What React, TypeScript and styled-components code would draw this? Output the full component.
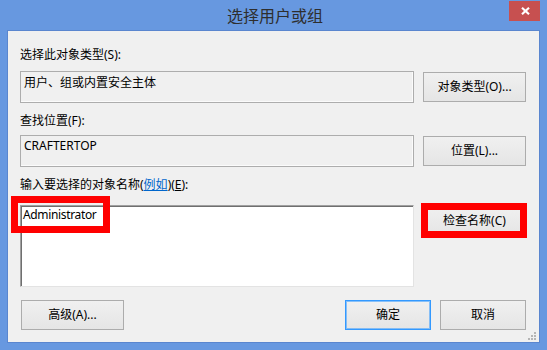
import React from "react";
import styled, { createGlobalStyle } from "styled-components";

const GlobalStyle = createGlobalStyle`
  html, body {
    margin: 0;
    padding: 0;
    background: #6798e0;
  }
  body {
    font-family: "Noto Sans", "Noto Sans CJK SC", sans-serif;
    font-size: 12px;
    color: #000;
  }
  * { box-sizing: border-box; }
`;

const Window = styled.div`
  width: 547px;
  height: 350px;
  background: #6798e0;
  display: flex;
  flex-direction: column;
  overflow: hidden;
`;

const TitleBar = styled.div`
  height: 30px;
  display: grid;
  grid-template-columns: 1fr auto 1fr;
  align-items: start;
`;

const Title = styled.div`
  grid-column: 2;
  line-height: 31px;
  font-size: 16px;
  color: #2e2e2e;
  font-family: "Noto Sans CJK SC", sans-serif;
  padding-left: 3px;
`;

const CloseButton = styled.div`
  grid-column: 3;
  justify-self: end;
  width: 31px;
  height: 20px;
  margin-top: 1px;
  margin-right: 7px;
  background: #c75050;
  display: flex;
  align-items: center;
  justify-content: center;
  padding-left: 1px;
`;

const Client = styled.div`
  position: relative;
  margin: 0 7px;
  height: 313px;
  border: 1px solid #5a86cf;
  background: #f0f0f0;
  padding: 16px 13px 0 12px;
  display: flex;
  flex-direction: column;
`;

const Label = styled.div<{ $mt?: number }>`
  line-height: 16px;
  height: 16px;
  margin-top: ${(p) => p.$mt ?? 0}px;
  white-space: nowrap;
`;

const Link = styled.span`
  color: #0066cc;
  text-decoration: underline;
`;

const Accel = styled.span`
  text-decoration: underline;
`;

const Row = styled.div<{ $mt: number }>`
  display: flex;
  gap: 9px;
  align-items: flex-start;
  margin-top: ${(p) => p.$mt}px;
`;

const ReadOnlyBox = styled.div<{ $pt: number }>`
  flex: 1;
  height: 32px;
  border: 1px solid #adadad;
  box-shadow: inset -1px -1px 0 #fbfbfb;
  background: #f0f0f0;
  padding: ${(p) => p.$pt}px 3px 0 3px;
  line-height: 16px;
`;

const Button = styled.div<{ $w?: number; $default?: boolean; $ml?: number }>`
  width: ${(p) => p.$w ?? 103}px;
  height: 30px;
  margin-top: 1px;
  margin-left: ${(p) => p.$ml ?? 0}px;
  border: 1px solid ${(p) => (p.$default ? "#3399ff" : "#acacac")};
  box-shadow: ${(p) => (p.$default ? "inset 0 0 0 1px rgba(51,153,255,0.55)" : "none")};
  background: linear-gradient(#f0f0f0, #e5e5e5);
  display: flex;
  align-items: center;
  justify-content: center;
  line-height: 16px;
  white-space: nowrap;
  flex-shrink: 0;
`;

const ButtonWrap = styled.div`
  position: relative;
  flex-shrink: 0;
`;

const EditWrap = styled.div`
  position: relative;
  flex: 1;
`;

const EditBox = styled.div`
  height: 82px;
  background: #fff;
  border: 1px solid;
  border-color: #a0a0a0 #e3e3e3 #e3e3e3 #a0a0a0;
  box-shadow: inset 1px 1px 0 #6f6f6f;
  padding: 1px 2px;
  line-height: 16px;
  letter-spacing: -0.35px;
`;

const RedFrame = styled.div<{ $l: number; $t: number; $w: number; $h: number }>`
  position: absolute;
  left: ${(p) => p.$l}px;
  top: ${(p) => p.$t}px;
  width: ${(p) => p.$w}px;
  height: ${(p) => p.$h}px;
  border: 7px solid #ff0000;
  pointer-events: none;
`;

const BottomRow = styled.div`
  display: flex;
  gap: 9px;
  margin-top: 12px;
`;

const Spacer = styled.div`
  flex: 1;
`;

const Grip = styled.svg`
  position: absolute;
  right: 3px;
  bottom: 2px;
`;

export default function App() {
  return (
    <>
      <GlobalStyle />
      <Window>
        <TitleBar>
          <Title>选择用户或组</Title>
          <CloseButton>
            <svg width="9" height="8" viewBox="0 0 9 8">
              <path d="M1 0.8 L8 7.2 M8 0.8 L1 7.2" stroke="#fff" strokeWidth="2.2" />
            </svg>
          </CloseButton>
        </TitleBar>
        <Client>
          <Label>选择此对象类型(S):</Label>
          <Row $mt={8}>
            <ReadOnlyBox $pt={3}>用户、组或内置安全主体</ReadOnlyBox>
            <Button>对象类型(O)...</Button>
          </Row>
          <Label $mt={10}>查找位置(F):</Label>
          <Row $mt={6}>
            <ReadOnlyBox $pt={2}>CRAFTERTOP</ReadOnlyBox>
            <Button>位置(L)...</Button>
          </Row>
          <Label $mt={10}>
            输入要选择的对象名称(<Link>例如</Link>)(<Accel>E</Accel>):
          </Label>
          <Row $mt={12}>
            <EditWrap>
              <EditBox>Administrator</EditBox>
              <RedFrame $l={-9} $t={-9} $w={99} $h={37} />
            </EditWrap>
            <ButtonWrap>
              <Button>检查名称(C)</Button>
              <RedFrame $l={-2} $t={-2} $w={106} $h={35} />
            </ButtonWrap>
          </Row>
          <BottomRow>
            <Button $ml={1}>高级(A)...</Button>
            <Spacer />
            <Button $w={86} $default>
              确定
            </Button>
            <Button $w={86}>取消</Button>
          </BottomRow>
          <Grip width="8" height="8" viewBox="0 0 8 8">
            <g fill="#b5b5b5">
              <rect x="6" y="0" width="2" height="2" />
              <rect x="3" y="3" width="2" height="2" />
              <rect x="6" y="3" width="2" height="2" />
              <rect x="0" y="6" width="2" height="2" />
              <rect x="3" y="6" width="2" height="2" />
              <rect x="6" y="6" width="2" height="2" />
            </g>
          </Grip>
        </Client>
      </Window>
    </>
  );
}
